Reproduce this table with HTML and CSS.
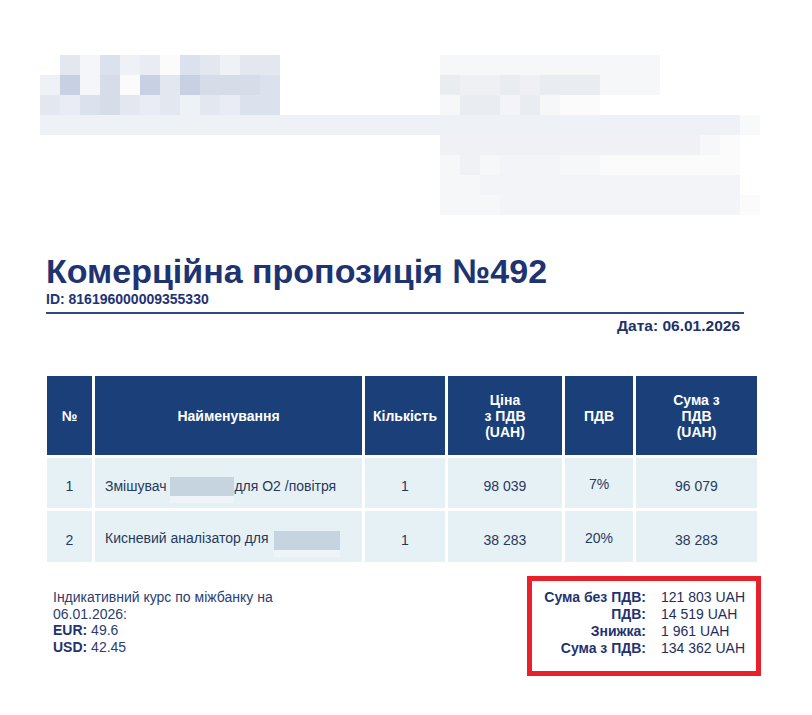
FILE: index.html
```html
<!DOCTYPE html>
<html lang="uk">
<head>
<meta charset="utf-8">
<title>Комерційна пропозиція №492</title>
<link rel="stylesheet" href="styles.css">
</head>
<body>
<div class="page">
  <div class="blur">
    <i class="x"></i><i class="a"></i><i class="b"></i><i class="c"></i><i class="e"></i><i class="i"></i><i class="j"></i><i class="c"></i><i class="a"></i><i class="e"></i><i class="a"></i><i class="a"></i><i class="x s8"></i><i class="f s11"></i><i class="x s5"></i>
    <i class="e"></i><i class="d"></i><i class="b"></i><i class="h"></i><i class="j"></i><i class="d"></i><i class="a"></i><i class="d"></i><i class="h"></i><i class="h"></i><i class="h"></i><i class="c"></i><i class="x s8"></i><i class="g"></i><i class="g2"></i><i class="g2"></i><i class="g"></i><i class="g2"></i><i class="g"></i><i class="g"></i><i class="g"></i><i class="f s3"></i><i class="x s5"></i>
    <i class="a"></i><i class="i"></i><i class="c"></i><i class="h"></i><i class="a"></i><i class="i"></i><i class="a"></i><i class="e"></i><i class="a"></i><i class="i"></i><i class="c"></i><i class="c"></i><i class="x s8"></i><i class="f"></i><i class="g"></i><i class="g"></i><i class="m"></i><i class="g"></i><i class="f"></i><i class="j s2"></i><i class="x s8"></i>
    <i class="e s35"></i><i class="k"></i>
    <i class="x s20"></i><i class="l s13"></i><i class="f"></i><i class="j"></i><i class="x"></i>
    <i class="x s20"></i><i class="f"></i><i class="l"></i><i class="f"></i><i class="m s3"></i><i class="f s2"></i><i class="j s7"></i><i class="x"></i>
    <i class="x s20"></i><i class="f s2"></i><i class="m s13"></i><i class="x"></i>
    <i class="x s20"></i><i class="f s3"></i><i class="m s12"></i><i class="j"></i>
  </div>

  <header class="doc-head">
    <h1 class="title">Комерційна пропозиція №492</h1>
    <div class="doc-id">ID: 816196000009355330</div>
    <div class="rule"></div>
    <div class="date">Дата: 06.01.2026</div>
  </header>

  <table class="items">
    <colgroup>
      <col class="c-no"><col class="c-name"><col class="c-qty"><col class="c-price"><col class="c-vat"><col class="c-sum">
    </colgroup>
    <thead>
      <tr>
        <th>№</th>
        <th>Найменування</th>
        <th>Кількість</th>
        <th>Ціна<br>з ПДВ<br>(UAH)</th>
        <th>ПДВ</th>
        <th>Сума з<br>ПДВ<br>(UAH)</th>
      </tr>
    </thead>
    <tbody>
      <tr class="r1">
        <td>1</td>
        <td class="name">Змішувач <span class="redact r-a"></span>для O2 /повітря</td>
        <td>1</td>
        <td>98 039</td>
        <td class="vat">7%</td>
        <td>96 079</td>
      </tr>
      <tr class="r2">
        <td>2</td>
        <td class="name">Кисневий аналізатор для <span class="redact r-b"></span></td>
        <td>1</td>
        <td>38 283</td>
        <td class="vat">20%</td>
        <td>38 283</td>
      </tr>
    </tbody>
  </table>

  <div class="foot">
    <div class="rates">
      Індикативний курс по міжбанку на 06.01.2026:<br>
      <b>EUR:</b> 49.6<br>
      <b>USD:</b> 42.45
    </div>
    <div class="totals">
      <div class="t-row"><span class="t-label">Сума без ПДВ:</span><span class="t-val">121 803 UAH</span></div>
      <div class="t-row"><span class="t-label">ПДВ:</span><span class="t-val">14 519 UAH</span></div>
      <div class="t-row"><span class="t-label">Знижка:</span><span class="t-val">1 961 UAH</span></div>
      <div class="t-row"><span class="t-label">Сума з ПДВ:</span><span class="t-val">134 362 UAH</span></div>
    </div>
  </div>
</div>
</body>
</html>
```

FILE: styles.css
```css
html, body {
  margin: 0;
  padding: 0;
  background: #ffffff;
}
body {
  font-family: "Liberation Sans", Arial, sans-serif;
  color: #1f3571;
}
.page {
  width: 812px;
  padding-top: 55px;
}

/* pixelated (redacted) letterhead */
.blur {
  display: grid;
  grid-template-columns: repeat(36, 20px);
  grid-auto-rows: 20px;
  margin-left: 40px;
  width: 720px;
}
.blur i { display: block; }
.blur .s2 { grid-column: span 2; }
.blur .s3 { grid-column: span 3; }
.blur .s5 { grid-column: span 5; }
.blur .s7 { grid-column: span 7; }
.blur .s8 { grid-column: span 8; }
.blur .s11 { grid-column: span 11; }
.blur .s12 { grid-column: span 12; }
.blur .s13 { grid-column: span 13; }
.blur .s20 { grid-column: span 20; }
.blur .s35 { grid-column: span 35; }
.blur .x { background: transparent; }
.blur .a { background: #e2e7f0; }
.blur .b { background: #f4f6f9; }
.blur .c { background: #dce2ed; }
.blur .d { background: #c8d1e3; }
.blur .e { background: #eef1f6; }
.blur .h { background: #d6dde9; }
.blur .i { background: #e9ecf4; }
.blur .j { background: #fbfbfc; }
.blur .f { background: #f6f7f9; }
.blur .g { background: #e9ecf1; }
.blur .g2 { background: #eef0f4; }
.blur .k { background: #f8f9fb; }
.blur .l { background: #f0f1f5; }
.blur .m { background: #f3f4f7; }

/* document heading */
.doc-head {
  margin: 37px 0 0 46px;
  width: 698px;
}
.title {
  margin: 0;
  font-size: 34px;
  line-height: 39px;
  font-weight: bold;
  color: #1e3372;
}
.doc-id {
  font-size: 14px;
  line-height: 16px;
  font-weight: bold;
  color: #1e3372;
}
.rule {
  margin-top: 5px;
  height: 2px;
  background: #2a4a82;
}
.date {
  margin-top: 3px;
  padding-right: 4px;
  text-align: right;
  font-size: 15.5px;
  line-height: 18px;
  font-weight: bold;
  color: #1e3268;
}

/* items table */
.items {
  margin: 38px 0 0 44px;
  border-collapse: separate;
  border-spacing: 3px;
  table-layout: fixed;
  width: 715px;
}
.c-no { width: 45px; }
.c-name { width: 267px; }
.c-qty { width: 80px; }
.c-price { width: 114px; }
.c-vat { width: 68px; }
.c-sum { width: 121px; }
.items th {
  background: #1b4079;
  color: #ffffff;
  font-size: 14px;
  line-height: 16px;
  font-weight: bold;
  height: 79px;
  padding: 0;
  text-align: center;
  vertical-align: middle;
}
.items td {
  background: #e6f1f5;
  color: #27395e;
  font-size: 14px;
  line-height: 16px;
  text-align: center;
  vertical-align: middle;
  padding: 6px 0 0;
}
.items .r1 td { height: 44px; }
.items .r2 td { height: 45px; }
.items td.name {
  text-align: left;
  padding-left: 10px;
}
.items .r1 td.vat { height: 48px; padding-top: 2px; }
.items .r2 td.vat { height: 49px; padding-top: 2px; }
.redact {
  display: inline-block;
  vertical-align: -5px;
  height: 19px;
  background: #c6d4df;
  box-shadow: 0 7px 0 #eef4f7;
}
.r-a { width: 64px; margin-left: 0; }
.r-b { width: 66px; margin-left: 2px; vertical-align: -7px; }

/* footer */
.foot {
  display: flex;
  justify-content: space-between;
  align-items: flex-start;
  margin: 11px 0 0 53px;
  width: 708px;
}
.rates {
  width: 240px;
  margin-top: 13px;
  font-size: 14px;
  line-height: 16.7px;
  color: #2b3d72;
}
.rates b { color: #1e3372; }
.totals {
  width: 224px;
  border: 5px solid #e8202a;
  padding: 8px 0 14px;
  font-size: 14px;
  line-height: 17px;
}
.t-row {
  display: flex;
  gap: 15px;
}
.t-label {
  width: 114px;
  text-align: right;
  font-weight: bold;
  color: #1e3372;
}
.t-val {
  color: #1f2e5c;
}
```
